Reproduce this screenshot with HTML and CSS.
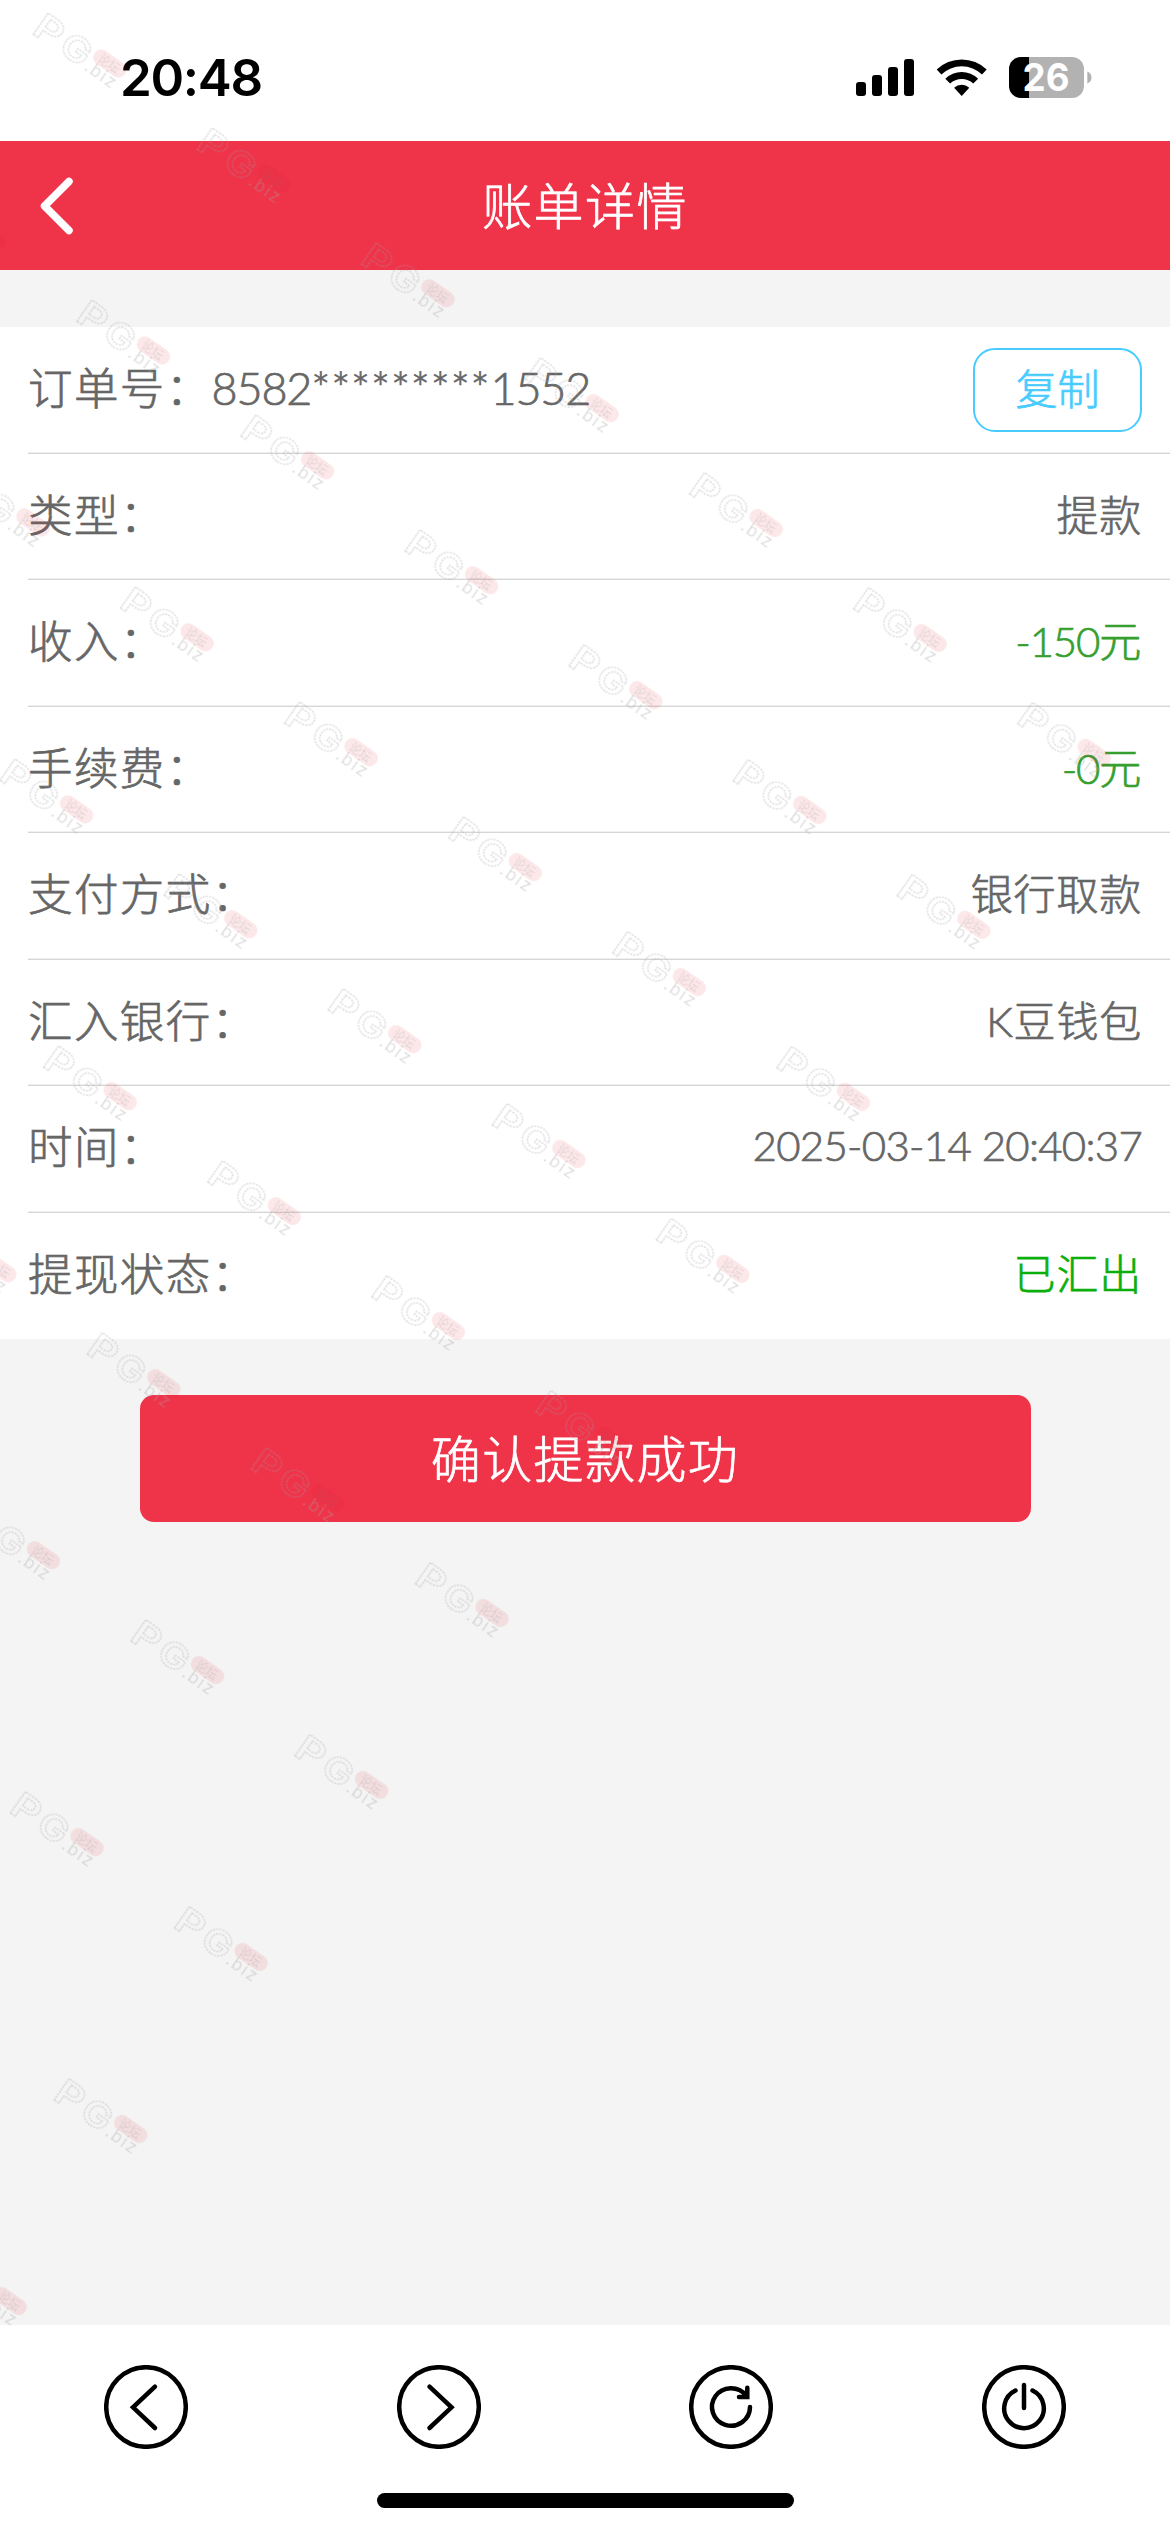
FILE: index.html
```html
<!DOCTYPE html>
<html lang="zh-CN">
<head>
<meta charset="utf-8">
<title>账单详情</title>
<link rel="stylesheet" href="styles.css">
</head>
<body>
<div class="screen">
  <div class="status-bar">
    <span class="clock">20:48</span>
    <svg class="status-icons" width="236" height="60" viewBox="856 48 236 60">
      <rect x="856" y="82" width="10" height="14" rx="3"/>
      <rect x="872" y="75" width="10" height="21" rx="3"/>
      <rect x="888" y="67" width="10" height="29" rx="3"/>
      <rect x="904" y="59" width="10" height="37" rx="3"/>
      <path d="M936.7 69.5 A36 36 0 0 1 986.7 69.5 L982 74.4 A29.5 29.5 0 0 0 941.4 74.4 Z"/>
      <path d="M945.3 78.7 A23.5 23.5 0 0 1 978.1 78.7 L973.3 83.6 A17 17 0 0 0 950.1 83.6 Z"/>
      <path d="M954.1 87.7 A11 11 0 0 1 969.3 87.7 L961.7 96 Z"/>
      <path class="battery-rest" d="M1029 57 H1072 a12 12 0 0 1 12 12 V86 a12 12 0 0 1 -12 12 H1029 Z"/>
      <path d="M1029 57 H1021 a12 12 0 0 0 -12 12 V86 a12 12 0 0 0 12 12 H1029 Z"/>
      <path class="battery-rest" d="M1087.3 71.5 a6.4 6.4 0 0 1 0 12 Z"/>
      <text class="battery-level" x="1046" y="91" text-anchor="middle" textLength="47" lengthAdjust="spacingAndGlyphs">26</text>
    </svg>
  </div>

  <header class="title-bar">
    <svg class="back" width="34" height="58" viewBox="0 0 34 58"><path d="M29 4.5 L4.5 29 L29 53.5"/></svg>
    <h1 class="title">账单详情</h1>
  </header>

  <main class="content">
    <section class="details">
      <div class="row">
        <span class="label">订单号：<span class="order-no">8582<span class="mask">*********</span>1552</span></span>
        <button class="copy">复制</button>
      </div>
      <div class="row"><span class="label">类型：</span><span class="value">提款</span></div>
      <div class="row"><span class="label">收入：</span><span class="value amount"><span class="figure">-150</span>元</span></div>
      <div class="row"><span class="label">手续费：</span><span class="value amount"><span class="figure">-0</span>元</span></div>
      <div class="row"><span class="label">支付方式：</span><span class="value">银行取款</span></div>
      <div class="row"><span class="label">汇入银行：</span><span class="value">K豆钱包</span></div>
      <div class="row"><span class="label">时间：</span><span class="value date">2025-03-14 20:40:37</span></div>
      <div class="row"><span class="label">提现状态：</span><span class="value done">已汇出</span></div>
    </section>
    <button class="confirm">确认提款成功</button>
  </main>

  <nav class="toolbar">
    <svg class="tool" viewBox="-42 -42 84 84"><circle r="39.8"/><path d="M9 -20.3 L-13 .3 L9 21"/></svg>
    <svg class="tool" viewBox="-42 -42 84 84"><circle r="39.8"/><path d="M-9.5 -20.3 L12.5 .3 L-9.5 21"/></svg>
    <svg class="tool" viewBox="-42 -42 84 84"><circle r="39.8"/><path d="M19 0 A19 18.7 0 1 1 15 -11.5 M16.3 -19.3 V-10 H8"/></svg>
    <svg class="tool" viewBox="-42 -42 84 84"><circle r="39.8"/><path d="M-8.5 -16.5 A19.8 19.8 0 1 0 8.5 -16.5 M0 -22 V1"/></svg>
  </nav>
  <div class="home-area"><div class="home-bar"></div></div>

  <svg class="watermark" width="1170" height="2532" viewBox="0 0 1170 2532" aria-hidden="true">
    <defs>
      <pattern id="mark" width="200.3" height="210" y="-40" patternUnits="userSpaceOnUse">
        <g transform="translate(0 40)">
          <text class="mark-name" x="-1" y="-1" textLength="28" lengthAdjust="spacingAndGlyphs">P</text>
          <text class="mark-name" x="31" y="-1" textLength="30" lengthAdjust="spacingAndGlyphs">G</text>
          <rect class="mark-pill" x="63" y="-29" width="37" height="16" rx="8"/>
          <text class="mark-tag" x="69" y="-16.5">论坛</text>
          <text class="mark-domain" x="63" y="-1" textLength="34">.biz</text>
        </g>
      </pattern>
    </defs>
    <rect transform="translate(31 34) rotate(35)" y="-40" width="1402" height="2100" fill="url(#mark)"/>
  </svg>
</div>
</body>
</html>
```
FILE: styles.css
```css
* { box-sizing: border-box; }

body {
  margin: 0;
  background: #fff;
  font-family: Lato, "Noto Sans CJK SC", sans-serif;
  color: #666;
}

button { font: inherit; cursor: pointer; }

.screen {
  position: relative;
  display: flex;
  flex-direction: column;
  width: 1170px;
  height: 2532px;
  overflow: hidden;
}

/* status bar */
.status-bar {
  display: flex;
  justify-content: space-between;
  align-items: center;
  height: 141px;
  padding: 15px 78px 0 120px;
  color: #000;
}

.clock {
  font: 600 51px/60px Inter, sans-serif;
  letter-spacing: -1.3px;
}

.status-icons { overflow: visible; }

.battery-rest { fill: #b2b2b2; }

.battery-level {
  font: 700 38px Inter, sans-serif;
  fill: #fff;
}

/* title bar */
.title-bar {
  display: grid;
  grid-template-columns: 110px 1fr 110px;
  align-items: center;
  height: 129px;
  background: #ef3349;
  color: #fff;
}

.back {
  margin-left: 40px;
  fill: none;
  stroke: #fff;
  stroke-width: 7.5;
  stroke-linecap: round;
  stroke-linejoin: round;
}

.title {
  margin: 0;
  font-size: 50px;
  font-weight: 300;
  line-height: 70px;
  letter-spacing: 1.4px;
  text-align: center;
}

.title,
.details,
.copy,
.confirm { -webkit-text-stroke: .7px currentColor; }

/* detail list */
.content {
  display: flex;
  flex-direction: column;
  align-items: center;
  height: 2055px;
  padding-top: 57px;
  background: #f4f4f4;
}

.details {
  display: grid;
  grid-template-rows: repeat(8, 126.5px);
  width: 100%;
  height: 1012px;
  padding-left: 28px;
  background: #fff;
}

.row {
  display: flex;
  justify-content: space-between;
  align-items: center;
  padding-right: 28px;
  background: linear-gradient(#efefef 50%, #d6d6d6 50%) bottom / 100% 2px no-repeat;
}

.row:last-child { background: none; }

.label {
  padding-bottom: 4px;
  font-size: 44.5px;
  font-weight: 300;
  line-height: 60px;
  letter-spacing: 1.4px;
}

.order-no {
  font-size: 45px;
  letter-spacing: -1.2px;
}

.mask { letter-spacing: .8px; }

.value {
  padding-bottom: 4px;
  font-size: 42px;
  font-weight: 300;
  line-height: 60px;
  letter-spacing: .8px;
}

.figure { letter-spacing: -1.2px; }

.date {
  padding-bottom: 8px;
  letter-spacing: -.75px;
}

.amount { color: #36a02f; }
.done { color: #0baf0b; }

.copy {
  width: 169px;
  height: 84px;
  padding: 0 0 7px;
  border: 2px solid #48cbff;
  border-radius: 22px;
  background: none;
  color: #48cbff;
  font-size: 42px;
  font-weight: 300;
}

.confirm {
  width: 891px;
  height: 127px;
  margin-top: 56px;
  padding: 0 0 6px;
  border: 0;
  border-radius: 14px;
  background: #ef3349;
  color: #fff;
  font-size: 50px;
  font-weight: 300;
  letter-spacing: 1.4px;
}

/* bottom toolbar */
.toolbar {
  display: grid;
  grid-template-columns: repeat(4, 1fr);
  justify-items: center;
  height: 168px;
  padding-top: 40px;
}

.tool {
  width: 84px;
  height: 84px;
  fill: none;
  stroke: #000;
  stroke-width: 4.5;
  stroke-linecap: round;
}

.home-area {
  display: flex;
  justify-content: center;
}

.home-bar {
  width: 417px;
  height: 15px;
  border-radius: 8px;
  background: #000;
}

/* repeated brand mark over the page */
.watermark {
  position: absolute;
  inset: 0;
  pointer-events: none;
}

.mark-name {
  font: 600 36px Inter, sans-serif;
  fill: none;
  stroke: rgba(160, 160, 168, .32);
  stroke-width: 1.4;
  stroke-dasharray: 2 1;
}

.mark-pill { fill: rgba(225, 20, 40, .1); }

.mark-tag {
  font: 400 12px "Noto Sans CJK SC", sans-serif;
  fill: rgba(110, 120, 120, .18);
}

.mark-domain {
  font: 400 17px Inter, sans-serif;
  fill: rgba(165, 165, 165, .34);
}
```
